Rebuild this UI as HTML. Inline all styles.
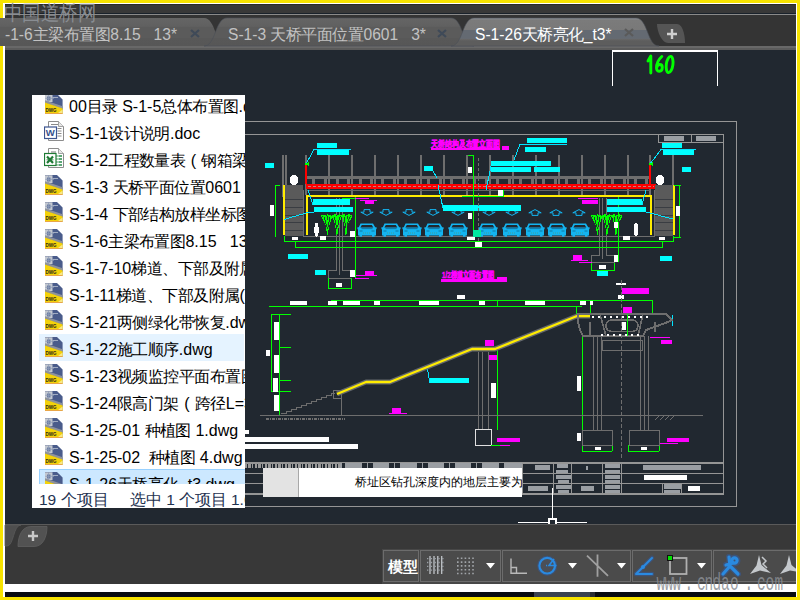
<!DOCTYPE html>
<html><head><meta charset="utf-8">
<style>
*{margin:0;padding:0;box-sizing:border-box}
html,body{width:800px;height:600px;overflow:hidden;background:#f7e300;font-family:"Liberation Sans",sans-serif}
.abs{position:absolute}
.c{letter-spacing:-0.5px}
.k{letter-spacing:-0.55px}
.fn{position:absolute;font-size:16px;line-height:18px;white-space:nowrap;color:#000}
.tt{position:absolute;top:26px;font-size:15.6px;line-height:18px;white-space:nowrap;color:#c2c2c2}
</style></head>
<body>
<div class="abs" style="left:3px;top:3px;width:794px;height:594px;background:#fff"></div>
<!-- app -->
<div class="abs" style="left:5px;top:4px;width:791px;height:580px;background:#383838;overflow:hidden"></div>
<div class="abs" style="left:5px;top:4px;width:791px;height:1px;background:#2a2a2a"></div>
<div class="abs" style="left:5px;top:13px;width:791px;height:1px;background:#1a222b"></div>
<div class="abs" style="left:5px;top:14px;width:791px;height:1px;background:#8a8a8a"></div>
<div class="abs" style="left:5px;top:15px;width:791px;height:35px;background:#343434"></div>
<div class="abs" style="left:5px;top:46px;width:791px;height:4px;background:#5b5b5b"></div><div class="abs" style="left:5px;top:46px;width:791px;height:2px;background:#686868"></div>
<!-- tabs -->
<svg class="abs" style="left:0;top:0" width="800" height="60">
 <defs>
  <linearGradient id="gi" x1="0" y1="18" x2="0" y2="46" gradientUnits="userSpaceOnUse">
   <stop offset="0" stop-color="#656565"/><stop offset="0.3" stop-color="#606060"/><stop offset="0.32" stop-color="#5b5b5b"/><stop offset="0.7" stop-color="#5b5b5b"/><stop offset="0.72" stop-color="#585858"/><stop offset="1" stop-color="#575757"/>
  </linearGradient>
  <linearGradient id="ga" x1="0" y1="18" x2="0" y2="46" gradientUnits="userSpaceOnUse">
   <stop offset="0" stop-color="#8a8f95"/><stop offset="0.08" stop-color="#7b7b7b"/><stop offset="0.42" stop-color="#797979"/><stop offset="0.43" stop-color="#646a72"/><stop offset="0.73" stop-color="#646a72"/><stop offset="0.74" stop-color="#6a6a6a"/><stop offset="0.82" stop-color="#5d5d5d"/><stop offset="1" stop-color="#5d5d5d"/>
  </linearGradient>
 </defs>
 <path d="M0,18 L204,18 C216,18 215,46 227,46 L0,46 Z" fill="url(#gi)"/>
 <path d="M204,46 C216,46 215,18 227,18 L451,18 C463,18 462,46 474,46 Z" fill="url(#gi)" stroke="#4a4f57" stroke-width="0.6"/>
 <path d="M451,46 C463,46 462,18 474,18 L636,18 C648,18 647,46 659,46 Z" fill="url(#ga)" stroke="#4a4f57" stroke-width="0.6"/>
 <path d="M657,24 L677,24 C683,24 685,36 685,43 L668,43 C662,43 657,32 657,24 Z" fill="#555555"/>
 <path d="M667,34 h10 M672,29 v10" stroke="#cfcfcf" stroke-width="2.4"/>
 <path d="M191,30 l8,7 M199,30 l-8,7" stroke="#3f4a58" stroke-width="2.2"/>
 <path d="M438,30 l8,7 M446,30 l-8,7" stroke="#3f4a58" stroke-width="2.2"/>
 <path d="M625,29 l8,7 M633,29 l-8,7" stroke="#5a5a5a" stroke-width="2.2"/>
</svg>
<div class="tt" style="left:5px">-1-6<span class="c">主梁布置图</span>8.15&nbsp;&nbsp; 13*</div>
<div class="tt" style="left:228px">S-1-3 <span class="c">天桥平面位置</span>0601&nbsp;&nbsp; 3*</div>
<div class="tt" style="left:475px;color:#fff">S-1-26<span class="c">天桥亮化</span>_t3*</div>
<!-- canvas -->
<div class="abs" style="left:5px;top:50px;width:791px;height:474px;background:#212830"></div>
<svg class="abs" style="left:0;top:0" width="800" height="600" viewBox="0 0 800 600">
<defs>
 <clipPath id="cv"><rect x="5" y="50" width="791" height="474"/></clipPath>
 <symbol id="car" viewBox="0 0 20 14">
  <path d="M3.5,0.6 H16 L18.2,4.3 H19.6 V6 L19,6.4 V12.6 H17.6 V13.8 H15 V12.6 H5 V13.8 H2.4 V12.6 H1 V6.4 L0.4,6 V4.3 H1.8 Z" fill="#14b4f0"/>
  <path d="M4.8,2 H14.8 L16.3,4.4 H3.4 Z" fill="#212830"/>
  <path d="M4.5,5.6 H15.5" stroke="#0e5f86" stroke-width="0.7"/>
  <path d="M2.5,8 h3 M14.5,8 h3" stroke="#0e6f96" stroke-width="0.9"/>
  <path d="M6,10 h8" stroke="#4f9a80" stroke-width="0.8" stroke-dasharray="1 1"/>
 </symbol>
 <symbol id="adn" viewBox="0 0 14 7">
  <path d="M4,0.6 H10 V3.2 H13.2 L7,6.4 L0.8,3.2 H4 Z" fill="none" stroke="#14b4f0" stroke-width="1"/>
 </symbol>
 <symbol id="aup" viewBox="0 0 14 7">
  <path d="M4,6.4 H10 V3.8 H13.2 L7,0.6 L0.8,3.8 H4 Z" fill="none" stroke="#14b4f0" stroke-width="1"/>
 </symbol>
 <symbol id="plant" viewBox="0 0 33 21">
  <g fill="#00ff00">
   <path d="M0.5,1.5 L3,0.5 L5,1.5 L7,0.3 L10,1 L12.5,0.5 L13.5,2.5 L12,4 L9,12 L8,20.5 L7,20.5 L5.5,11 L2,4 Z"/>
   <path d="M12,1 L15,0.2 L17,1 L19.5,0.3 L22,1.2 L21,4 L19,11 L17.5,20.5 L16.5,20.5 L15,11 L13,4 Z"/>
   <path d="M21.5,1 L24,0.3 L26.5,1 L29,0.3 L32,1.5 L31.5,4 L29,8 L27.5,12 L26.5,20.5 L25.5,20.5 L24.5,12 L22.5,4 Z"/>
  </g>
  <g stroke="#212830" stroke-width="0.9" fill="none">
   <path d="M4,3 L7.5,15 M10,3 L8,13 M7,2 V6"/>
   <path d="M14.5,3 L16.8,15 M19.5,3 L17.5,13"/>
   <path d="M24,3 L26,14 M29.5,3 L27,12 M27,2 V5"/>
   <path d="M2,2 h1 M6,1.8 h1 M11,1.8 h1 M16,1.8 h1 M20,2 h1 M25,1.8 h1 M30,2 h1"/>
  </g>
 </symbol>
</defs>
<g clip-path="url(#cv)" shape-rendering="crispEdges">
 <!-- frame -->
 <g fill="none" stroke="#959595" stroke-width="1.4">
  <path d="M200,121.5 H736.5 V506.5 H200"/>
  <path d="M200,134.5 H723.5 V494 H200"/>
 </g>
 <!-- top right small table -->
 <path d="M658.5,134.5 V142.5 H723 M691.5,134.5 V142.5" stroke="#959595" stroke-width="1" fill="none"/>
 <rect x="664" y="136" width="20" height="5" fill="#9a9ea3"/>
 <rect x="696" y="136" width="20" height="5" fill="#9a9ea3"/>
 <!-- title block -->
 <g stroke="#959595" stroke-width="1" fill="none">
  <path d="M200,462.5 H723.5" stroke-width="2"/>
  <path d="M200,473.5 H723.5 M200,483.5 H723.5"/>
  <path d="M522.5,462 V494 M553.5,462 V494 M571.5,462 V494 M602.5,462 V494 M621.5,462 V494 M662.5,483 V494 M681.5,483 V494"/>
 </g>
 <g fill="#9a9ea3">
  <rect x="535" y="465" width="15" height="5"/><rect x="557" y="464" width="11" height="4"/><rect x="556" y="470" width="12" height="3"/>
  <rect x="556" y="475" width="15" height="4"/><rect x="558" y="480" width="11" height="3"/>
  <rect x="528" y="486" width="20" height="5"/><rect x="556" y="485" width="15" height="4"/><rect x="558" y="490" width="11" height="3"/>
  <rect x="586" y="466" width="2" height="4"/><rect x="581" y="486" width="13" height="5"/>
  <rect x="605" y="464" width="15" height="4"/><rect x="605" y="470" width="15" height="3"/>
  <rect x="605" y="475" width="15" height="4"/><rect x="605" y="480" width="15" height="3"/>
  <rect x="605" y="485" width="15" height="4"/><rect x="605" y="490" width="15" height="3"/>
  <rect x="643" y="465" width="58" height="5"/>
  <rect x="664" y="484" width="17" height="5"/><rect x="664" y="490" width="16" height="3"/>
  <rect x="340" y="463" width="182" height="5"/>
 </g>
 <rect x="644" y="475" width="43" height="5" fill="#fff"/>
 <g fill="#212830"><rect x="342" y="463" width="3" height="5"/><rect x="362" y="463" width="5" height="5"/><rect x="368" y="463" width="5" height="5"/><rect x="389" y="463" width="5" height="5"/><rect x="395" y="463" width="5" height="5"/><rect x="417" y="463" width="5" height="5"/><rect x="423" y="463" width="5" height="5"/><rect x="444" y="463" width="5" height="5"/><rect x="450" y="463" width="5" height="5"/><rect x="471" y="463" width="5" height="5"/><rect x="477" y="463" width="5" height="5"/><rect x="499" y="463" width="5" height="5"/></g>
 <path d="M245,465.5 H340" stroke="#9a9a9a" stroke-width="4" stroke-dasharray="2 1 3 1 1 2"/>
 <rect x="688" y="486" width="12" height="5" fill="#fff"/>
 <!-- white bars left-bottom -->
 <rect x="200" y="430" width="49" height="4" fill="#fff"/>
 <rect x="200" y="437" width="129" height="5" fill="#fff"/>
 <rect x="200" y="444" width="158" height="5" fill="#fff"/>

 <!-- ===== cross section ===== -->
 <!-- lamp posts -->
 <g stroke="#6e6e6e" stroke-width="1.4">
  <path d="M283,155 V197 M306,155 V195 M329,155 V195 M352,155 V195 M375,155 V195 M398,155 V195 M421,155 V195 M444,155 V195 M467,155 V195 M490,155 V195 M513,155 V195 M536,155 V195 M559,155 V195 M582,155 V195 M605,155 V195 M628,155 V195 M650,155 V195 M673,155 V185"/>
  <path d="M286,155 V197"/>
 </g>
 <!-- railing -->
 <rect x="306" y="176" width="344" height="2.5" fill="#6e6e6e"/>
 <g fill="#6e6e6e">
  <rect x="312" y="178" width="2.5" height="6"/><rect x="324" y="178" width="2.5" height="6"/><rect x="336" y="178" width="2.5" height="6"/><rect x="347" y="178" width="2.5" height="6"/><rect x="359" y="178" width="2.5" height="6"/><rect x="370" y="178" width="2.5" height="6"/><rect x="381" y="178" width="2.5" height="6"/><rect x="393" y="178" width="2.5" height="6"/><rect x="404" y="178" width="2.5" height="6"/><rect x="416" y="178" width="2.5" height="6"/><rect x="427" y="178" width="2.5" height="6"/><rect x="439" y="178" width="2.5" height="6"/><rect x="450" y="178" width="2.5" height="6"/><rect x="462" y="178" width="2.5" height="6"/><rect x="473" y="178" width="2.5" height="6"/><rect x="485" y="178" width="2.5" height="6"/><rect x="496" y="178" width="2.5" height="6"/><rect x="508" y="178" width="2.5" height="6"/><rect x="519" y="178" width="2.5" height="6"/><rect x="531" y="178" width="2.5" height="6"/><rect x="542" y="178" width="2.5" height="6"/><rect x="554" y="178" width="2.5" height="6"/><rect x="565" y="178" width="2.5" height="6"/><rect x="577" y="178" width="2.5" height="6"/><rect x="588" y="178" width="2.5" height="6"/><rect x="600" y="178" width="2.5" height="6"/><rect x="611" y="178" width="2.5" height="6"/><rect x="623" y="178" width="2.5" height="6"/><rect x="634" y="178" width="2.5" height="6"/><rect x="645" y="178" width="2.5" height="6"/>
 </g>
 <!-- red deck -->
 <rect x="306" y="184" width="350" height="5" fill="#ff0000"/>
 <path d="M308,186.5 H654" stroke="#c08080" stroke-width="1" stroke-dasharray="3 2"/>
 <path d="M306,164 V184 M650,164 V184" stroke="#ff0000" stroke-width="2"/>
 <path d="M306,190 H650" stroke="#666" stroke-width="1"/>
 <!-- yellow box -->
 <path d="M307,235 V195.5 H651 V235" stroke="#ffec00" stroke-width="2" fill="none"/>
 <path d="M284,185 V235 M674,185 V235" stroke="#ffec00" stroke-width="2.2"/>
 <!-- stair blocks -->
 <rect x="285" y="185" width="18" height="51" fill="#5a5a5a"/>
 <rect x="655" y="185" width="18" height="51" fill="#5a5a5a"/>
 <g stroke="#3a3d42" stroke-width="1">
  <path d="M285,199.5 H303 M285,207.5 H303 M285,215 H303 M285,222.5 H303 M285,230.5 H303"/>
  <path d="M655,199.5 H673 M655,207.5 H673 M655,215 H673 M655,222.5 H673 M655,230.5 H673"/>
 </g>
 <path d="M303.5,190 V236 M654.5,190 V236" stroke="#6e6e6e" stroke-width="1"/>
 <!-- ground -->
 <path d="M303,236.5 H655" stroke="#6e6e6e" stroke-width="1"/>
 <!-- pier lines -->
 <path d="M336.5,198 V270 H328 V278 M339.5,198 V275 M342.5,198 V270 H355 M328,278 H351" stroke="#6e6e6e" stroke-width="1" fill="none"/>
 <path d="M599.5,198 V255.5 H591.5 V262.5 M602.5,198 V258.5 M606.5,198 V255.5 H618 M591.5,262.5 H614.5" stroke="#6e6e6e" stroke-width="1" fill="none"/>
 <path d="M591.5,262.5 V270.5 H614.5 V262.5 M618.5,197 V262" stroke="#00ff00" stroke-width="1" fill="none"/>
 <rect x="599" y="265" width="7" height="4" fill="#fff"/><rect x="614" y="255" width="4" height="7" fill="#fff"/>
 <rect x="573" y="255" width="9" height="5" fill="#ff00ff"/><path d="M571,260.5 H588 M579,262.5 H592" stroke="#ff00ff" stroke-width="1"/>
 <!-- persons -->
 <g fill="#fff">
  <ellipse cx="294" cy="180" rx="4.5" ry="5"/>
  <ellipse cx="660" cy="180" rx="4.5" ry="5"/>
  <ellipse cx="316.5" cy="230" rx="2.2" ry="6.5"/><circle cx="316.5" cy="224.5" r="1.7"/>
  <ellipse cx="636" cy="230" rx="2.2" ry="6.5"/><circle cx="636" cy="224.5" r="1.7"/>
 </g>
 <!-- plants -->
 <svg x="320" y="214" width="33" height="21" viewBox="0 0 33 21"><use href="#plant"/></svg>
 <svg x="590" y="214" width="33" height="21" viewBox="0 0 33 21"><use href="#plant"/></svg>
 <g shape-rendering="geometricPrecision">
 <!-- arrows -->
 <svg x="360" y="209" width="14" height="7"><use href="#adn"/></svg>
 <svg x="379" y="209" width="14" height="7"><use href="#adn"/></svg>
 <svg x="402" y="209" width="14" height="7"><use href="#adn"/></svg>
 <svg x="426" y="209" width="14" height="7"><use href="#adn"/></svg>
 <svg x="451" y="209" width="14" height="7"><use href="#adn"/></svg>
 <svg x="482" y="209" width="14" height="7"><use href="#adn"/></svg>
 <svg x="505" y="209" width="14" height="7"><use href="#adn"/></svg>
 <svg x="528" y="209" width="14" height="7"><use href="#aup"/></svg>
 <svg x="549" y="209" width="14" height="7"><use href="#aup"/></svg>
 <svg x="572" y="209" width="14" height="7"><use href="#aup"/></svg>
 <!-- cars -->
 <svg x="357" y="223" width="20" height="14"><use href="#car"/></svg>
 <svg x="381" y="223" width="20" height="14"><use href="#car"/></svg>
 <svg x="402" y="223" width="20" height="14"><use href="#car"/></svg>
 <svg x="424" y="223" width="20" height="14"><use href="#car"/></svg>
 <svg x="448" y="223" width="20" height="14"><use href="#car"/></svg>
 <svg x="478" y="223" width="20" height="14"><use href="#car"/></svg>
 <svg x="502" y="223" width="20" height="14"><use href="#car"/></svg>
 <svg x="525" y="223" width="20" height="14"><use href="#car"/></svg>
 <svg x="547" y="223" width="20" height="14"><use href="#car"/></svg>
 <svg x="570" y="223" width="20" height="14"><use href="#car"/></svg>
 </g>
 <!-- green dims cross section -->
 <g stroke="#00ff00" stroke-width="1" fill="none">
  <path d="M275.5,185 V237 M275.5,185 H280"/>
  <path d="M679.5,185 V237 M674,185 H681 M674,237 H681"/>
  <path d="M284,241.5 H674 M295.5,241.5 V248 M295,247.5 H663 M662.5,241.5 V248 M673.5,236 V241.5 M284.5,236 V241.5"/>
  <path d="M355.5,197 V278 M473.5,155 V237 M497,300 V306 M342,198.5 H355.5"/>
  <path d="M468,155 H473 M328,278 V288.5 H351 V278"/>
  <path d="M331,300.5 H652 M269,306.5 H582 M652,300 V314 M590.5,300 V314 M576.5,306 V314"/>
  <path d="M271,314 V392 M279.5,314 V415 M271,314 H291 M279.5,347 H291 M279.5,380 H291 M271,391.5 H291"/>
  <path d="M497,349 V430 M582.5,337 V451 M582,451 H612 M628,451 H659 M612,445 V451 M628,445 V451 M659,445 V451"/>
 </g>
 <!-- white small rects cross section -->
 <g fill="#fff">
  <rect x="270" y="205" width="4" height="11"/><rect x="676" y="206" width="4" height="10"/>
  <rect x="292" y="237" width="6" height="3"/><rect x="320" y="236" width="6" height="4"/>
  <rect x="350" y="231" width="5" height="6"/><rect x="468" y="167" width="4" height="6"/>
  <rect x="468" y="213" width="4" height="6"/><rect x="498" y="190" width="5" height="6"/>
  <rect x="467" y="237" width="8" height="3"/><rect x="475" y="242" width="7" height="5"/>
  <rect x="614" y="222" width="4" height="6"/><rect x="623" y="236" width="7" height="4"/>
  <rect x="659" y="237" width="6" height="3"/>
  <rect x="336" y="283" width="6" height="4"/><rect x="350" y="270" width="5" height="7"/>
  <rect x="457" y="295" width="8" height="4"/>
  <rect x="290" y="301" width="17" height="4"/><rect x="328" y="301" width="9" height="4"/><rect x="343" y="301" width="17" height="4"/><rect x="374" y="301" width="6" height="4"/>
  <rect x="419" y="301" width="20" height="4"/><rect x="479" y="301" width="6" height="4"/><rect x="525" y="301" width="20" height="4"/><rect x="580" y="301" width="6" height="4"/><rect x="590" y="301" width="3" height="4"/>
  <rect x="274" y="322" width="5" height="18"/><rect x="266" y="350" width="4" height="6"/><rect x="274" y="355" width="5" height="18"/><rect x="273" y="378" width="5" height="14"/><rect x="274" y="395" width="5" height="16"/>
  <rect x="491" y="383" width="5" height="15"/><rect x="577" y="376" width="4" height="15"/><rect x="577" y="433" width="4" height="8"/>
  <rect x="618" y="295" width="6" height="4"/><rect x="616" y="283" width="10" height="2"/><rect x="622" y="322" width="4" height="8"/>
  <rect x="595" y="447" width="6" height="3"/><rect x="641" y="447" width="6" height="3"/>
 </g>
 <!-- cyan labels -->
 <g fill="#00ffff">
  <rect x="317" y="143" width="20" height="5"/><rect x="317" y="149" width="32" height="6"/>
  <rect x="265" y="163" width="9" height="5"/>
  <rect x="662" y="143" width="20" height="5"/><rect x="663" y="149" width="31" height="6"/>
  <rect x="682" y="167" width="9" height="5"/>
  <rect x="527" y="138" width="40" height="5"/><rect x="525" y="147" width="21" height="5"/>
  <rect x="491" y="161" width="60" height="5"/><rect x="491" y="167" width="40" height="5"/><rect x="534" y="167" width="26" height="5"/>
  <rect x="424" y="166" width="9" height="5"/>
  <rect x="313" y="199" width="37" height="6"/><rect x="314" y="207" width="39" height="5"/>
  <rect x="607" y="199" width="35" height="6"/><rect x="607" y="207" width="39" height="5"/>
  <rect x="443" y="205" width="78" height="6"/>
  <rect x="288" y="254" width="20" height="5"/><rect x="315" y="270" width="11" height="5"/>
  <rect x="597" y="271" width="11" height="5"/><rect x="660" y="256" width="12" height="5"/>
  <rect x="430" y="378" width="39" height="5"/>
 </g>
 <g stroke="#00e5ff" stroke-width="1" fill="none">
  <path d="M306,164 L314,149.5 H351"/>
  <path d="M650,164 L661,149.5 H696"/>
  <path d="M514,160 L520,144 H567"/>
  <path d="M486,190 L491,166.5"/>
  <path d="M433,171 L437,178"/>
  <path d="M284,219.5 L306,213 L314,212"/>
  <path d="M308,190 L313,205"/>
  <path d="M673,219 L646,212"/>
  <path d="M646,190 L642,205"/>
  <path d="M443,208 L438,185"/>
  <path d="M427,367 L430,383"/>
  <path d="M672.5,315 V326"/>
 </g>
 <!-- magenta -->
 <g fill="#ff00ff">
  <rect x="502" y="146" width="7" height="4"/>
  <rect x="365" y="200" width="9" height="4"/><rect x="582" y="200" width="16" height="4"/>
  <rect x="365" y="271" width="9" height="5"/>
  
  <rect x="485" y="340" width="9" height="6"/><rect x="488" y="355" width="9" height="5"/>
  <rect x="392" y="408" width="9" height="5"/>
  <rect x="497" y="438" width="23" height="4"/>
  <rect x="622" y="288" width="27" height="6"/><rect x="623" y="307" width="9" height="6"/>
  <rect x="667" y="438" width="22" height="4"/><rect x="661" y="340" width="11" height="4"/>
 </g>
 <g stroke="#ff00ff" stroke-width="1" fill="none">
  <path d="M355,198.5 H369 M360,200.5 H377 M578,198.5 H598"/>
  <path d="M356,275.5 H377 M355,278 H369"/>
  <path d="M389,413.5 H407 M618,313.5 H634 M650,337 H670 M488,445 H510 M660,443.5 H678"/>
 </g>
 <text x="431" y="147" font-family="Liberation Sans" font-size="9" font-weight="bold" fill="#ff00ff" stroke="#ff00ff" stroke-width="0.5" textLength="69" lengthAdjust="spacingAndGlyphs">天桥结构及布置立面图</text>
 <rect x="431" y="147.5" width="69" height="2.5" fill="#ff00ff"/>
 <text x="442" y="278" font-family="Liberation Sans" font-size="9" font-weight="bold" fill="#ff00ff" stroke="#ff00ff" stroke-width="0.5" textLength="52" lengthAdjust="spacingAndGlyphs">1/2梯道立面布置图</text>
 <rect x="441" y="278.5" width="66" height="3.5" fill="#ff00ff"/><rect x="497" y="277" width="10" height="2" fill="#ff00ff"/>
 <path d="M303,164 L309,162 V166 Z M647,164 L653,162 V166 Z" fill="#00ff00"/>
 <path d="M478.5,158 V242" stroke="#6e6e6e" stroke-width="1" stroke-dasharray="3 2"/>
 <path d="M462,196.5 H503 V190" stroke="#00ff00" stroke-width="1" fill="none"/>
 <rect x="473" y="230" width="8" height="7" fill="#00e8a0"/>
 <!-- staircase elevation -->
 <path d="M260,415.5 H703" stroke="#6e6e6e" stroke-width="1"/>
 <path d="M266,419 H345" stroke="#707070" stroke-width="2" stroke-dasharray="3 1 1 1"/>
 <path d="M281,413 h5 v-2 h5 v-2 h5 v-2 h5 v-2 h5 v-2 h5 v-2 h5 v-2 h5 v-2 h5 v-2 h5 v-2 h4" stroke="#6e6e6e" stroke-width="1" fill="none"/>
 <path d="M341.5,398 V415 M333,390 h8 v8 h-8 z" stroke="#6e6e6e" stroke-width="1" fill="none"/>
 <path d="M337,394 L366,382 H390 L472,349 H495 L577,316 H590" stroke="#64686c" stroke-width="5" fill="none" stroke-linejoin="round" shape-rendering="auto"/>
 <path d="M337,394 L366,382 H390 L472,349 H495 L577,316 H590" stroke="#ffec00" stroke-width="2.3" fill="none" stroke-linejoin="round" shape-rendering="auto"/>
 <!-- mid pier -->
 <path d="M478.5,352 V430 M482.5,352 V430 M488.5,352 V430" stroke="#6e6e6e" stroke-width="1" fill="none"/>
 <path d="M475,429.5 H491 V445 H475 Z" stroke="#e0e0e0" stroke-width="1" fill="none"/>
 <path d="M491,445 H500" stroke="#00ff00" stroke-width="1"/>
 <!-- right pier / box girder -->
 <path d="M578,314 H666 L672,320 L668,322 L646,330 L643,336 H583 L580,330 L578,322 Z" stroke="#6e6e6e" stroke-width="2" fill="none"/>
 <path d="M600,314 L606,336 M643,314 L638,336 M590,322 V336 M655,322 V332" stroke="#6e6e6e" stroke-width="1.6" fill="none"/>
 <rect x="606" y="320" width="32" height="11.5" rx="5.5" stroke="#6e6e6e" stroke-width="1.6" fill="none"/>
 <path d="M592,316.5 H652 M601,334.5 H640" stroke="#fff" stroke-width="2" stroke-dasharray="1.5 4.5"/>
 <path d="M627.5,314 V336" stroke="#00ff00" stroke-width="1"/>
 <path d="M593.5,336 V430 M597.5,336 V430 M601.5,336 V430 M640.5,336 V430 M644.5,336 V430 M648.5,336 V430" stroke="#6e6e6e" stroke-width="1" fill="none"/>
 <path d="M602,340.5 H642 V350 H602 Z" stroke="#6e6e6e" stroke-width="1" fill="none"/>
 <path d="M621.5,280 V460" stroke="#6e6e6e" stroke-width="1" stroke-dasharray="4 2"/>
 <path d="M582,430 H612 V445 H582 Z M629,430 H659 V445 H629 Z" stroke="#6e6e6e" stroke-width="1" fill="none"/>
 <path d="M655,420 l5,-5 M660,420 l5,-5 M665,420 l5,-5 M670,420 l5,-5" stroke="#6e6e6e" stroke-width="1"/>
 <!-- 160 label -->
 <path d="M612.5,86 V50.8 H717.5 V86" stroke="#fff" stroke-width="1.6" fill="none"/>
 <g stroke="#00ff00" stroke-width="2.9" fill="none" shape-rendering="auto" stroke-linecap="round" stroke-linejoin="round">
  <path d="M648,61 L650.8,56 V73"/>
  <path d="M661.8,56.5 C658.5,59.5 656.5,63.5 656.5,68 C656.5,72.5 662.3,72.5 662.3,67.5 C662.3,63.5 657.5,63.5 656.8,67.5"/>
  <ellipse cx="669.6" cy="64.5" rx="3.3" ry="8.2" transform="rotate(8 669.6 64.5)"/>
 </g>
 <!-- crosshair -->
 <path d="M552.5,488 V519 M518,522.5 H549 M556,522.5 H587" stroke="#fff" stroke-width="1.3"/>
 <rect x="549" y="519" width="7" height="6" fill="none" stroke="#fff" stroke-width="1.3"/>
</g>
</svg>


<!-- file panel -->
<svg width="0" height="0" style="position:absolute">
 <defs>
  <symbol id="dwg" viewBox="0 0 18 20">
   <path d="M0,0 H12 L17.6,5.6 V19.6 H0 Z" fill="#4a5c8b"/>
   <rect x="0" y="0.3" width="7.5" height="7.7" fill="#c3c8d0"/>
   <rect x="2" y="2.5" width="3.5" height="4" fill="#6b7ca3"/>
   <path d="M0.3,4.3 H9 M3.6,0.3 V8" stroke="#8d9ab5" stroke-width="0.8" fill="none"/>
   <path d="M7.5,3.5 H13" stroke="#b9c1d0" stroke-width="0.8"/>
   <path d="M0,6.2 L17.6,12.2 V15 L0,8.8 Z" fill="#8e929b"/>
   <path d="M0,8.6 L17.6,14.6 V19.6 H0 Z" fill="#f4d20a"/>
   <path d="M13,19 L17.6,15.5 V19 Z" fill="#f8e88a"/>
   <path d="M0,19 H17.6 V19.8 H0 Z" fill="#f0a040"/>
   <text x="0.6" y="18.2" font-family="Liberation Sans" font-weight="bold" font-size="5.6" fill="#2a2618" textLength="11" lengthAdjust="spacingAndGlyphs">DWG</text>
  </symbol>
  <symbol id="doc" viewBox="0 0 20 20">
   <path d="M4.5,0.5 H14.5 L19.5,5.5 V19.5 H4.5 Z" fill="#fff" stroke="#8d8d8d" stroke-width="1"/>
   <path d="M14.5,0.5 V5.5 H19.5" fill="#e8e8e8" stroke="#8d8d8d" stroke-width="0.8"/>
   <path d="M7,3.5 h7 M13.5,7.5 h4 M13.5,10 h4 M13.5,12.5 h4 M13.5,15 h4" stroke="#7d7d7d" stroke-width="0.9"/>
   <rect x="0.5" y="6" width="12" height="11.5" fill="#fff" stroke="#3d5590" stroke-width="1.2"/>
   <text x="1.8" y="15" font-family="Liberation Sans" font-weight="bold" font-size="8.5" fill="#34508c" textLength="9" lengthAdjust="spacingAndGlyphs">W</text>
  </symbol>
  <symbol id="xls" viewBox="0 0 20 20">
   <path d="M4.5,0.5 H14.5 L19.5,5.5 V19.5 H4.5 Z" fill="#fff" stroke="#8d8d8d" stroke-width="1"/>
   <path d="M14.5,0.5 V5.5 H19.5" fill="#e8e8e8" stroke="#8d8d8d" stroke-width="0.8"/>
   <path d="M7,4 h5" stroke="#7d7d7d" stroke-width="1"/>
   <path d="M13,7 v2 M13,10 v2 M13,13 v2 M13,16 v2" stroke="#3e9a5c" stroke-width="0.9"/>
   <path d="M14.5,7 h3.5 v2 h-3.5z M14.5,10 h3.5 v2 h-3.5z M14.5,13 h3.5 v2 h-3.5z M14.5,16 h3.5 v2 h-3.5z" fill="#5da777"/>
   <rect x="0.5" y="5.5" width="11.5" height="12" fill="#fff" stroke="#1e7b34" stroke-width="1.2"/>
   <path d="M3,8.5 L9,15 M9,8.5 L3,15" stroke="#1f7a35" stroke-width="2.2"/><path d="M2.5,11.8 h7" stroke="#1f7a35" stroke-width="0.8"/>
  </symbol>
 </defs>
</svg>
<div class="abs" style="left:32px;top:95px;width:213px;height:413px;background:#fff;overflow:hidden">
 <div class="abs" style="left:0;top:0;width:213px;height:389px;overflow:hidden">
  <div class="abs" style="left:7px;top:239px;width:205px;height:27px;background:#e5f3ff"></div>
  <div class="abs" style="left:7px;top:374px;width:230px;height:28px;background:#cce8ff;border:1px solid #99d1ff"></div>
  <svg class="abs" style="left:13px;top:-1px" width="18" height="20"><use href="#dwg"/></svg><div class="fn" style="left:37px;top:3px">00<span class="k">目录</span> S-1-5<span class="k">总体布置图</span>.dwg</div>
<svg class="abs" style="left:12px;top:26px" width="20" height="20"><use href="#doc"/></svg><div class="fn" style="left:37px;top:30px">S-1-1<span class="k">设计说明</span>.doc</div>
<svg class="abs" style="left:12px;top:53px" width="20" height="20"><use href="#xls"/></svg><div class="fn" style="left:37px;top:57px">S-1-2<span class="k">工程数量表</span><span style="display:inline-block;width:16px;text-align:center">(</span><span class="k">钢箱梁</span>).xls</div>
<svg class="abs" style="left:13px;top:80px" width="18" height="20"><use href="#dwg"/></svg><div class="fn" style="left:37px;top:84px">S-1-3 <span class="k">天桥平面位置</span>0601&nbsp;&nbsp;&nbsp; 3.dwg</div>
<svg class="abs" style="left:13px;top:107px" width="18" height="20"><use href="#dwg"/></svg><div class="fn" style="left:37px;top:111px">S-1-4 <span class="k">下部结构放样坐标图</span>.dwg</div>
<svg class="abs" style="left:13px;top:134px" width="18" height="20"><use href="#dwg"/></svg><div class="fn" style="left:37px;top:138px">S-1-6<span class="k">主梁布置图</span>8.15&nbsp;&nbsp; 13.dwg</div>
<svg class="abs" style="left:13px;top:161px" width="18" height="20"><use href="#dwg"/></svg><div class="fn" style="left:37px;top:165px">S-1-7-10<span class="k">梯道、下部及附属</span>.dwg</div>
<svg class="abs" style="left:13px;top:188px" width="18" height="20"><use href="#dwg"/></svg><div class="fn" style="left:37px;top:192px">S-1-11<span class="k">梯道、下部及附属</span>(<span class="k">下</span>).dwg</div>
<svg class="abs" style="left:13px;top:215px" width="18" height="20"><use href="#dwg"/></svg><div class="fn" style="left:37px;top:219px">S-1-21<span class="k">两侧绿化带恢复</span>.dwg</div>
<svg class="abs" style="left:13px;top:242px" width="18" height="20"><use href="#dwg"/></svg><div class="fn" style="left:37px;top:246px">S-1-22<span class="k">施工顺序</span>.dwg</div>
<svg class="abs" style="left:13px;top:269px" width="18" height="20"><use href="#dwg"/></svg><div class="fn" style="left:37px;top:273px">S-1-23<span class="k">视频监控平面布置图</span>.dwg</div>
<svg class="abs" style="left:13px;top:296px" width="18" height="20"><use href="#dwg"/></svg><div class="fn" style="left:37px;top:300px">S-1-24<span class="k">限高门架</span><span style="display:inline-block;width:16px;text-align:center">(</span><span class="k">跨径</span>L=3m).dwg</div>
<svg class="abs" style="left:13px;top:323px" width="18" height="20"><use href="#dwg"/></svg><div class="fn" style="left:37px;top:327px">S-1-25-01 <span class="k">种植图</span> 1.dwg</div>
<svg class="abs" style="left:13px;top:350px" width="18" height="20"><use href="#dwg"/></svg><div class="fn" style="left:37px;top:354px">S-1-25-02&nbsp; <span class="k">种植图</span> 4.dwg</div>
<svg class="abs" style="left:13px;top:377px" width="18" height="20"><use href="#dwg"/></svg><div class="fn" style="left:37px;top:381px">S-1-26<span class="k">天桥亮化</span>_t3.dwg</div>

 </div>
 <div class="fn" style="left:7px;top:396px;color:#1e3250;font-size:15.5px">19 个项目</div><div class="fn" style="left:98px;top:396px;color:#1e3250;font-size:15.5px">选中 1 个项目</div><div class="fn" style="left:199px;top:396px;color:#1e3250;font-size:15.5px">1.6 MB</div>
</div>
<div class="abs" style="left:5px;top:524px;width:791px;height:1px;background:#5a5a5a"></div>
<div class="abs" style="left:5px;top:584px;width:791px;height:8px;background:#fff"></div>
<div class="abs" style="left:5px;top:592px;width:791px;height:5px;background:#080b10"></div>
<div class="abs" style="left:534px;top:592px;width:56px;height:5px;background:#3a4250"></div><div class="abs" style="left:590px;top:592px;width:5px;height:5px;background:#2a2d33"></div>

<!-- layout tabs -->
<svg class="abs" style="left:0;top:520px" width="800" height="34">
 <path d="M5,5 H21 C13,5 14,26 7,26 H5 Z" fill="#4e4e4e" stroke="#5a5a5a" stroke-width="0.8"/>
 <path d="M18,26.5 C18,16 22,6.5 31,6.5 H47 C47,17 43,26.5 34,26.5 Z" fill="#525252" stroke="#606060" stroke-width="0.8"/>
 <path d="M28,16 h10 M33,11 v10" stroke="#c8c8c8" stroke-width="2.4"/>
</svg>
<!-- status bar -->
<div class="abs" style="left:382px;top:549px;width:414px;height:35px;background:#474747"></div>
<svg class="abs" style="left:0;top:540px" width="796" height="44">
 <g fill="#4b4b4b" stroke="#6c6c6c" stroke-width="1">
  <rect x="383.5" y="10.5" width="35" height="31"/>
  <rect x="420.5" y="10.5" width="80" height="31"/>
  <rect x="502.5" y="10.5" width="128" height="31"/>
  <rect x="632.5" y="10.5" width="79" height="31"/>
  <rect x="713.5" y="10.5" width="90" height="31"/>
 </g>
 <!-- grid icon -->
 <g stroke="#c0c4c8" stroke-width="1.3">
  <path d="M430,16 V34 M434,16 V34 M437.8,16 V34 M441.7,16 V34"/>
  <path d="M427,18.7 H445 M427,22.5 H445 M427,26.3 H445 M427,30.2 H445" stroke-dasharray="1.3 2.5" stroke="#9aa0a6"/>
 </g>
 <g fill="#a0a4a8">
  <path d="M457,17.5h1.6v1.6h-1.6z M460.8,17.5h1.6v1.6h-1.6z M464.6,17.5h1.6v1.6h-1.6z M468.4,17.5h1.6v1.6h-1.6z M472.2,17.5h1.6v1.6h-1.6z
  M457,21.3h1.6v1.6h-1.6z M460.8,21.3h1.6v1.6h-1.6z M464.6,21.3h1.6v1.6h-1.6z M468.4,21.3h1.6v1.6h-1.6z M472.2,21.3h1.6v1.6h-1.6z
  M457,25.1h1.6v1.6h-1.6z M460.8,25.1h1.6v1.6h-1.6z M464.6,25.1h1.6v1.6h-1.6z M468.4,25.1h1.6v1.6h-1.6z M472.2,25.1h1.6v1.6h-1.6z
  M457,28.9h1.6v1.6h-1.6z M460.8,28.9h1.6v1.6h-1.6z M464.6,28.9h1.6v1.6h-1.6z M468.4,28.9h1.6v1.6h-1.6z M472.2,28.9h1.6v1.6h-1.6z
  M457,32.7h1.6v1.6h-1.6z M460.8,32.7h1.6v1.6h-1.6z M464.6,32.7h1.6v1.6h-1.6z M468.4,32.7h1.6v1.6h-1.6z M472.2,32.7h1.6v1.6h-1.6z"/>
 </g>
 <g fill="#fff">
  <path d="M486,23 H495 L490.5,28.5 Z"/>
  <path d="M568,23 H577 L572.5,28.5 Z"/>
  <path d="M617,23 H626 L621.5,28.5 Z"/>
  <path d="M697,23 H706 L701.5,28.5 Z"/>
 </g>
 <!-- ortho -->
 <path d="M511,18.5 V33.3 H527 M511,27.5 H516.5 V33" stroke="#b8b8b8" stroke-width="1.4" fill="none"/>
 <!-- polar -->
 <circle cx="547.2" cy="25.7" r="10" fill="#3d5378"/>
 <circle cx="547.2" cy="25.7" r="7.8" fill="#4b4f57" stroke="#2a8ae0" stroke-width="2.2"/>
 <path d="M554,19 L549,25.5 H556.5 M546,25.5 h1" stroke="#2a8ae0" stroke-width="1.6" fill="none"/>
 <!-- isodraft -->
 <path d="M597.5,14.5 V36.7 M587,15.6 L608,35.8" stroke="#a0a0a0" stroke-width="1.8"/>
 <!-- iso angle -->
 <path d="M636,34 L652,18 M636,34 H652" stroke="#3d5378" stroke-width="4.5" stroke-linecap="round"/>
 <path d="M636,34 L652,18 M636,34 H652" stroke="#2a8ae0" stroke-width="2" stroke-linecap="round"/>
 <circle cx="643" cy="27" r="2" fill="#2a8ae0"/>
 <!-- object snap square -->
 <rect x="670" y="18" width="16.5" height="16" fill="none" stroke="#b0b0b0" stroke-width="1.8"/>
 <rect x="667.5" y="15.5" width="5" height="5" fill="#00e000" stroke="#111" stroke-width="1"/>
 <!-- person icon -->
 <g stroke="#3d5378" stroke-width="6" fill="none" stroke-linecap="round" stroke-linejoin="round">
  <path d="M729,17 L730,26 L723,34 M730,26 L738,34 M726,25 L733,23"/><circle cx="734.5" cy="20.5" r="3"/>
 </g>
 <g stroke="#2a8ae0" stroke-width="3.2" fill="none" stroke-linecap="round" stroke-linejoin="round">
  <path d="M729,17 L730,26 L723,34 M730,26 L738,34 M726,25 L733,23"/><circle cx="734.5" cy="20.5" r="2.6"/>
 </g>
 <g fill="#c4c8cc">
  <path d="M759,15 L761.5,25 L771,33 L760,30.5 L750,34 L756.5,25.5 Z"/>
  <path d="M762,17 L766,21 L763,24 L767,28" stroke="#c4c8cc" stroke-width="1.5" fill="none"/>
  <path d="M789,15 L791.5,25 L800,32 L790,30.5 L780,34 L786.5,25.5 Z"/>
 </g>
</svg>
<div class="abs" style="left:388px;top:558px;font-size:14.5px;line-height:18px;color:#fff;font-weight:bold;white-space:nowrap">模型</div>
<!-- tooltip -->
<div class="abs" style="left:263px;top:468px;width:259px;height:29px;background:#fff;overflow:hidden">
 <div class="abs" style="left:0;top:0;width:36px;height:29px;background:#e3e3e3;border-right:1px solid #a8a8a8"></div>
 <div class="abs" style="left:92px;top:5px;font-size:12.4px;line-height:18px;color:#000;white-space:nowrap">桥址区钻孔深度内的地层主要为砂土</div>
</div>
<!-- watermarks -->
<div class="abs" style="left:4px;top:0px;font-family:'Liberation Serif',serif;font-size:21px;line-height:26px;color:rgba(140,144,150,0.95);font-weight:200;white-space:nowrap;transform:scaleX(0.88);transform-origin:0 0">中国道桥网</div>
<svg class="abs" style="left:0;top:0" width="800" height="600"><text transform="translate(656,589.5) scale(0.6,1)" font-family="Liberation Mono" font-size="24" fill="#8a8e94" fill-opacity="0.85" x="0.83 14.17 27.50 47.50 68.33 80.83 94.17 108.33 123.33 147.50 168.33 182.50 197.50">www.cndao.com</text></svg>
</body></html>
